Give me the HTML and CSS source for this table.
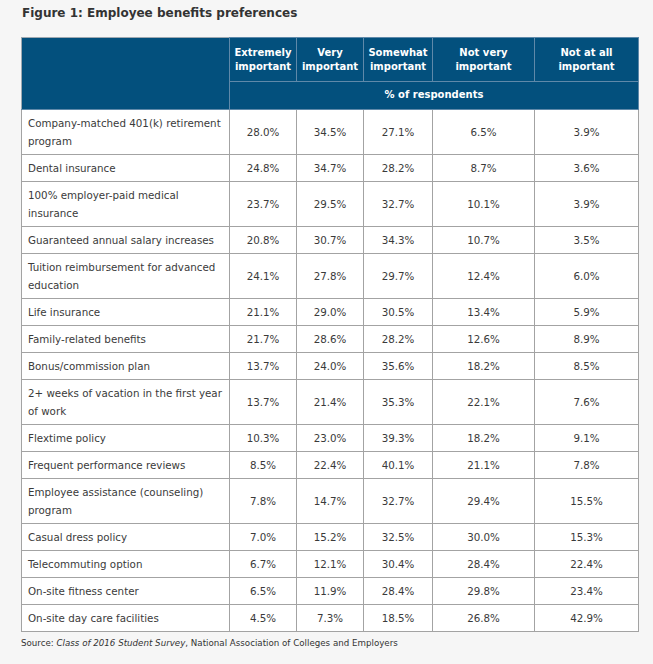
FILE: index.html
```html
<!DOCTYPE html>
<html>
<head>
<meta charset="utf-8">
<link rel="stylesheet" href="styles.css">
</head>
<body>
<div class="figure">
  <h1 class="title">Figure 1: Employee benefits preferences</h1>
  <table class="data">
    <colgroup>
      <col class="c-label"><col class="c-a"><col class="c-b"><col class="c-c"><col class="c-d"><col class="c-e">
    </colgroup>
    <thead>
      <tr>
        <th rowspan="2" class="blank"></th>
        <th>Extremely important</th>
        <th>Very important</th>
        <th>Somewhat important</th>
        <th>Not very important</th>
        <th>Not at all important</th>
      </tr>
      <tr>
        <th colspan="5" class="unit">% of respondents</th>
      </tr>
    </thead>
    <tbody>
      <tr><td>Company-matched 401(k) retirement program</td><td>28.0%</td><td>34.5%</td><td>27.1%</td><td>6.5%</td><td>3.9%</td></tr>
      <tr><td>Dental insurance</td><td>24.8%</td><td>34.7%</td><td>28.2%</td><td>8.7%</td><td>3.6%</td></tr>
      <tr><td>100% employer-paid medical insurance</td><td>23.7%</td><td>29.5%</td><td>32.7%</td><td>10.1%</td><td>3.9%</td></tr>
      <tr><td>Guaranteed annual salary increases</td><td>20.8%</td><td>30.7%</td><td>34.3%</td><td>10.7%</td><td>3.5%</td></tr>
      <tr><td>Tuition reimbursement for advanced education</td><td>24.1%</td><td>27.8%</td><td>29.7%</td><td>12.4%</td><td>6.0%</td></tr>
      <tr><td>Life insurance</td><td>21.1%</td><td>29.0%</td><td>30.5%</td><td>13.4%</td><td>5.9%</td></tr>
      <tr><td>Family-related benefits</td><td>21.7%</td><td>28.6%</td><td>28.2%</td><td>12.6%</td><td>8.9%</td></tr>
      <tr><td>Bonus/commission plan</td><td>13.7%</td><td>24.0%</td><td>35.6%</td><td>18.2%</td><td>8.5%</td></tr>
      <tr><td>2+ weeks of vacation in the first year of work</td><td>13.7%</td><td>21.4%</td><td>35.3%</td><td>22.1%</td><td>7.6%</td></tr>
      <tr><td>Flextime policy</td><td>10.3%</td><td>23.0%</td><td>39.3%</td><td>18.2%</td><td>9.1%</td></tr>
      <tr><td>Frequent performance reviews</td><td>8.5%</td><td>22.4%</td><td>40.1%</td><td>21.1%</td><td>7.8%</td></tr>
      <tr><td>Employee assistance (counseling) program</td><td>7.8%</td><td>14.7%</td><td>32.7%</td><td>29.4%</td><td>15.5%</td></tr>
      <tr><td>Casual dress policy</td><td>7.0%</td><td>15.2%</td><td>32.5%</td><td>30.0%</td><td>15.3%</td></tr>
      <tr><td>Telecommuting option</td><td>6.7%</td><td>12.1%</td><td>30.4%</td><td>28.4%</td><td>22.4%</td></tr>
      <tr><td>On-site fitness center</td><td>6.5%</td><td>11.9%</td><td>28.4%</td><td>29.8%</td><td>23.4%</td></tr>
      <tr><td>On-site day care facilities</td><td>4.5%</td><td>7.3%</td><td>18.5%</td><td>26.8%</td><td>42.9%</td></tr>
    </tbody>
  </table>
  <p class="source">Source: <em>Class of 2016 Student Survey</em>, National Association of Colleges and Employers</p>
</div>
</body>
</html>
```
FILE: styles.css
```css
html, body {
  margin: 0;
  padding: 0;
  background: #f6f6f6;
}
body {
  font-family: "DejaVu Sans", "Open Sans", sans-serif;
  color: #333333;
}
.figure {
  padding: 5px 15px 0 21px;
}
.title {
  margin: 0 0 16px 1px;
  font-size: 12px;
  line-height: 16px;
  font-weight: bold;
  color: #333333;
}
.data {
  border-collapse: collapse;
  table-layout: fixed;
  width: 617px;
  background: #ffffff;
  font-size: 10.3px;
}
.c-label { width: 208px; }
.c-a { width: 67px; }
.c-b { width: 67px; }
.c-c { width: 69px; }
.c-d { width: 102px; }
.c-e { width: 104px; }
.data th {
  background: #03507d;
  color: #ffffff;
  font-weight: bold;
  font-size: 10px;
  line-height: 14px;
  padding: 7px 2px 7px;
  border: 1px solid #5f89a9;
  text-align: center;
  vertical-align: middle;
  height: 29px;
}
.data th.blank {
  border-left-color: #9fa9b1;
  border-top-color: #9fa9b1;
}
.data th.unit {
  height: 12px;
  padding: 6px 2px 7px;
}
.data td {
  border: 1px solid #a3a3a3;
  padding: 4px 6px;
  line-height: 18px;
  text-align: center;
  vertical-align: middle;
  color: #3a3a3a;
}
.data td:first-child {
  text-align: left;
}
.source {
  margin: 5px 0 0;
  font-size: 8.7px;
  line-height: 12px;
  color: #333333;
}
```
